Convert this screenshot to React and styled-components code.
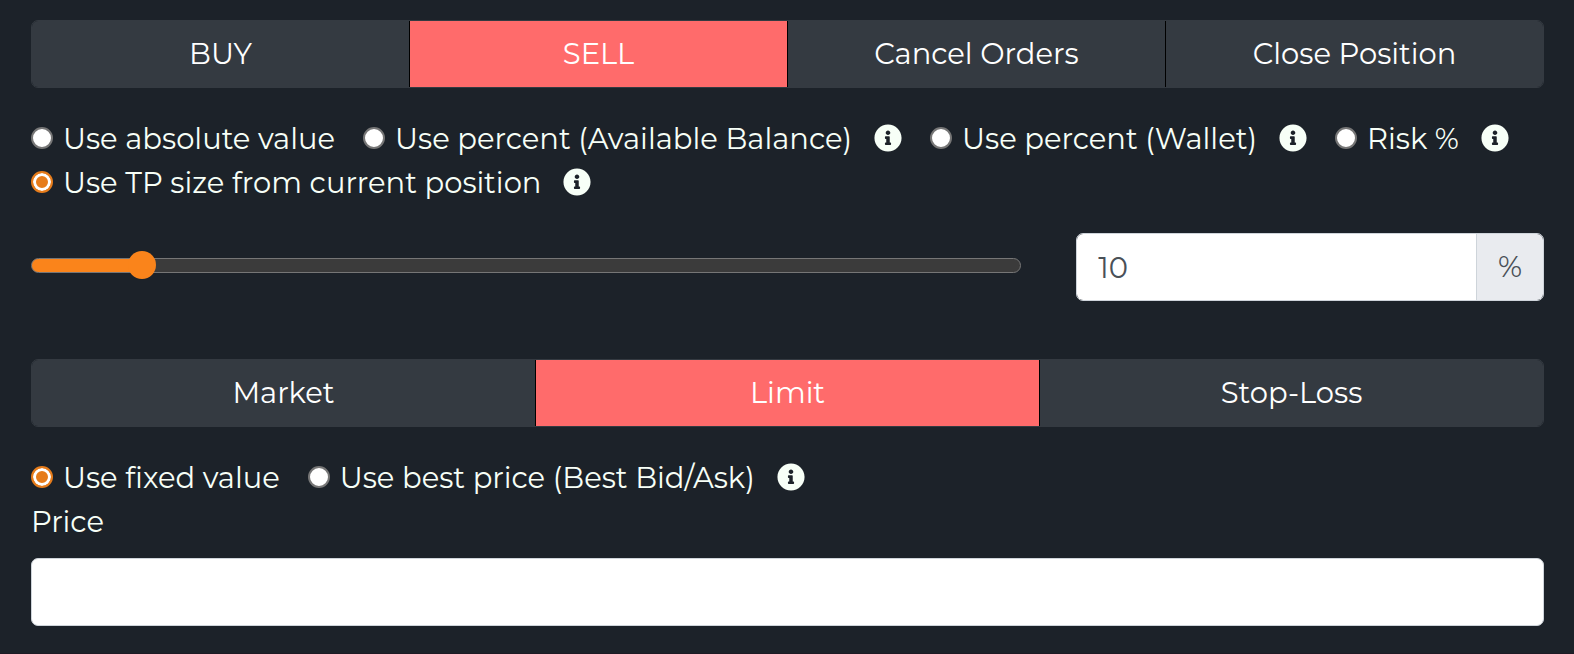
import React, { useState } from 'react';
import styled, { createGlobalStyle } from 'styled-components';
import { FaInfoCircle } from 'react-icons/fa';

const GlobalStyle = createGlobalStyle`
    * {
        box-sizing: border-box;
    }

    body {
        margin: 0;
        background-color: #1c2229;
        color: #f7fff7;
        font-family: Montserrat, Inter, sans-serif;
        font-size: 29px;
        line-height: 44px;
    }
`;

const Panel = styled.main`
    padding: 20px 30px 27px 31px;
    border-bottom: 1px solid #1d1a24;
`;

const ButtonGroup = styled.div`
    display: flex;
    height: 68px;
    border: 1px solid #343a41;
    border-radius: 7px;
    overflow: hidden;
`;

const TabButton = styled.button`
    flex: 1 1 0;
    padding: 0;
    border: 0;
    color: white;
    background-color: ${({ $active }) => ($active ? '#ff6b6b' : '#343a41')};
    font: inherit;
    cursor: pointer;

    & + & {
        border-left: 1px solid black;
    }
`;

const OptionList = styled.div`
    display: flex;
    flex-wrap: wrap;
    column-gap: 28px;
    margin-top: 29px;
`;

const Option = styled.div`
    display: flex;
    align-items: center;
`;

const OptionLabel = styled.label`
    display: flex;
    align-items: center;
    gap: 10px;
`;

const Radio = styled.input`
    appearance: none;
    width: 22px;
    height: 22px;
    margin: 0 0 2px;
    border: 2px solid #767676;
    border-radius: 50%;
    background-color: white;

    &:checked {
        border-color: #e67c1b;
        background-color: #e67c1b;
        box-shadow: inset 0 0 0 3px white;
    }
`;

const InfoIcon = styled(FaInfoCircle)`
    width: 28px;
    height: 28px;
    margin: 0 0 2px 22px;
`;

const SizeRow = styled.div`
    display: grid;
    grid-template-columns: 36fr 17fr;
    column-gap: 55px;
    align-items: center;
    margin: 28px 0 58px;
`;

const Slider = styled.input`
    appearance: none;
    width: 100%;
    height: 28px;
    margin: 0 0 4px;
    background: transparent;

    &::-webkit-slider-runnable-track {
        height: 15px;
        border: 1px solid #767676;
        border-radius: 8px;
        background: linear-gradient(#fa841b, #fa841b) 0 0 / var(--fill) 100% no-repeat #3b3b3b;
    }

    &::-webkit-slider-thumb {
        appearance: none;
        width: 28px;
        height: 28px;
        margin-top: -8px;
        border: 0;
        border-radius: 50%;
        background-color: #fa841b;
    }
`;

const InputGroup = styled.div`
    display: flex;
    height: 68px;
    border: 1px solid #ced4da;
    border-radius: 7px;
    overflow: hidden;
`;

const GroupInput = styled.input`
    flex: 1;
    min-width: 0;
    padding: 2px 21px 0;
    border: 0;
    background-color: white;
    color: #495057;
    font: inherit;
`;

const Addon = styled.span`
    display: flex;
    align-items: center;
    justify-content: center;
    width: 67px;
    border-left: 1px solid #ced4da;
    background-color: #e9ebef;
    color: #495057;
`;

const PriceLabel = styled.label`
    display: block;
    margin-bottom: 14px;
`;

const PriceInput = styled.input`
    display: block;
    width: 100%;
    height: 68px;
    padding: 2px 21px 0;
    border: 1px solid #ced4da;
    border-radius: 7px;
    background-color: white;
    color: #495057;
    font: inherit;
`;

const sides = ['BUY', 'SELL', 'Cancel Orders', 'Close Position'];
const orderTypes = ['Market', 'Limit', 'Stop-Loss'];

const sizeOptions = [
    { id: 'absolute', label: 'Use absolute value' },
    { id: 'percentBalance', label: 'Use percent (Available Balance)', info: true },
    { id: 'percentWallet', label: 'Use percent (Wallet)', info: true },
    { id: 'risk', label: 'Risk %', info: true },
    { id: 'tpSize', label: 'Use TP size from current position', info: true },
];

const priceOptions = [
    { id: 'fixed', label: 'Use fixed value' },
    { id: 'best', label: 'Use best price (Best Bid/Ask)', info: true },
];

const Tabs = ({ items, value, onChange }) => (
    <ButtonGroup>
        {items.map(item => (
            <TabButton key={item} type="button" $active={item === value} onClick={() => onChange(item)}>
                {item}
            </TabButton>
        ))}
    </ButtonGroup>
);

const Options = ({ name, items, value, onChange }) => (
    <OptionList>
        {items.map(item => (
            <Option key={item.id}>
                <OptionLabel>
                    <Radio
                        type="radio"
                        name={name}
                        checked={item.id === value}
                        onChange={() => onChange(item.id)}
                    />
                    {item.label}
                </OptionLabel>
                {item.info && <InfoIcon />}
            </Option>
        ))}
    </OptionList>
);

const App = () => {
    const [side, setSide] = useState('SELL');
    const [orderType, setOrderType] = useState('Limit');
    const [sizeMode, setSizeMode] = useState('tpSize');
    const [priceMode, setPriceMode] = useState('fixed');
    const [size, setSize] = useState('10');
    const [price, setPrice] = useState('');

    return (
        <>
            <GlobalStyle />
            <Panel>
                <Tabs items={sides} value={side} onChange={setSide} />
                <Options name="sizeMode" items={sizeOptions} value={sizeMode} onChange={setSizeMode} />

                <SizeRow>
                    <Slider
                        type="range"
                        min="0"
                        max="100"
                        aria-label="Size"
                        value={size}
                        onChange={e => setSize(e.target.value)}
                        style={{ '--fill': `${size}%` }}
                    />
                    <InputGroup>
                        <GroupInput
                            type="text"
                            aria-label="Size in percent"
                            value={size}
                            onChange={e => setSize(e.target.value)}
                        />
                        <Addon>%</Addon>
                    </InputGroup>
                </SizeRow>

                <Tabs items={orderTypes} value={orderType} onChange={setOrderType} />
                <Options name="priceMode" items={priceOptions} value={priceMode} onChange={setPriceMode} />

                <PriceLabel htmlFor="price">Price</PriceLabel>
                <PriceInput id="price" type="text" value={price} onChange={e => setPrice(e.target.value)} />
            </Panel>
        </>
    );
};

export default App;
